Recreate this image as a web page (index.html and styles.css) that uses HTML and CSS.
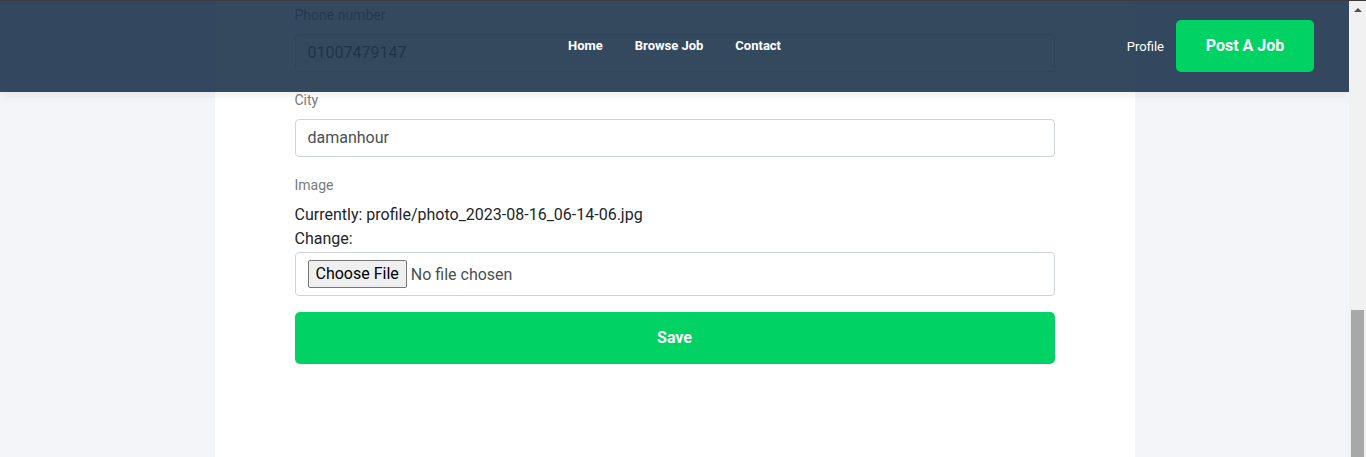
FILE: index.html
```html
<!DOCTYPE html>
<html lang="en">
<head>
<meta charset="utf-8">
<title>Edit Profile</title>
<link rel="stylesheet" href="styles.css">
</head>
<body>
<div class="window">
  <div class="viewport">
    <main class="page">
      <section class="card">
        <form class="profile-form">
          <div class="field">
            <label class="field-label">Phone number</label>
            <div class="input">01007479147</div>
          </div>
          <div class="field">
            <label class="field-label">City</label>
            <div class="input">damanhour</div>
          </div>
          <div class="field image-field">
            <label class="field-label">Image</label>
            <div class="current">Currently: profile/photo_2023-08-16_06-14-06.jpg</div>
            <div class="current">Change:</div>
            <div class="file-input">
              <span class="file-btn">Choose File</span>
              <span class="file-name">No file chosen</span>
            </div>
          </div>
          <button type="button" class="save-btn">Save</button>
        </form>
      </section>
    </main>
    <header class="topbar">
      <div class="topbar-left"></div>
      <nav class="nav">
        <a class="nav-link">Home</a>
        <a class="nav-link">Browse Job</a>
        <a class="nav-link">Contact</a>
      </nav>
      <div class="topbar-right">
        <a class="profile-link">Profile</a>
        <a class="post-btn">Post A Job</a>
      </div>
    </header>
  </div>
  <div class="scrollbar">
    <div class="scroll-arrow"></div>
    <div class="scroll-space"></div>
    <div class="scroll-thumb"></div>
  </div>
  <div class="frame-line"></div>
</div>
</body>
</html>
```

FILE: styles.css
```css
* { box-sizing: border-box; }

html, body {
  margin: 0;
  padding: 0;
  height: 457px;
  overflow: hidden;
  font-family: Roboto, "Liberation Sans", Arial, sans-serif;
}

.window {
  display: flex;
  width: 1366px;
  height: 457px;
  position: relative;
}

.viewport {
  position: relative;
  width: 1349px;
  height: 457px;
  overflow: hidden;
  background: #f4f5f9;
}

.page {
  display: flex;
  justify-content: center;
  height: 100%;
}

.card {
  width: 920px;
  background: #ffffff;
  padding: 5px 80px 0 80px;
}

.field {
  display: flex;
  flex-direction: column;
  margin-bottom: 18px;
}

.field-label {
  font-size: 14px;
  line-height: 20px;
  color: #777b80;
  margin-bottom: 9px;
}

.input {
  height: 38px;
  border: 1px solid #ced4da;
  border-radius: 4px;
  padding: 0 12px;
  font-size: 16px;
  line-height: 36px;
  color: #495057;
}

.image-field .field-label {
  margin-bottom: 8px;
}

.image-field {
  margin-bottom: 16px;
}

.current {
  font-size: 16px;
  line-height: 24px;
  color: #212529;
}

.file-input {
  display: flex;
  align-items: center;
  height: 44px;
  margin-top: 1px;
  border: 1px solid #ced4da;
  border-radius: 4px;
  padding: 0 12px;
  font-size: 16px;
  color: #495057;
}

.file-btn {
  display: inline-flex;
  align-items: center;
  height: 28px;
  padding: 0 7px 1px;
  margin-right: 4px;
  background: #efefef;
  border: 1px solid #767676;
  border-radius: 2px;
  color: #000;
}

.file-name {
  color: #495057;
}

.save-btn {
  display: block;
  width: 100%;
  height: 52px;
  padding: 0 0 2px;
  border: none;
  border-radius: 5px;
  background: #00d363;
  color: #fff;
  font-family: inherit;
  font-size: 16px;
  font-weight: 700;
}

.topbar {
  position: absolute;
  top: 0;
  left: 0;
  right: 0;
  height: 92px;
  display: grid;
  grid-template-columns: 1fr auto 1fr;
  align-items: center;
  padding: 0 35px;
  background: rgba(24, 48, 72, 0.88);
  box-shadow: 0 2px 10px rgba(0, 0, 0, 0.08);
}

.nav {
  display: flex;
  gap: 32px;
  margin-top: -1px;
}

.nav-link {
  color: #fff;
  font-size: 13px;
  font-weight: 700;
}

.topbar-right {
  display: flex;
  justify-content: flex-end;
  align-items: center;
  gap: 12px;
}

.profile-link {
  color: #fff;
  font-size: 13px;
}

.post-btn {
  display: flex;
  align-items: center;
  justify-content: center;
  width: 138px;
  height: 52px;
  padding-bottom: 2px;
  border-radius: 5px;
  background: #00d363;
  color: #fff;
  font-size: 16px;
  font-weight: 700;
}

.scrollbar {
  width: 17px;
  height: 457px;
  background: #f1f1f1;
  display: flex;
  flex-direction: column;
  align-items: center;
}

.scroll-arrow {
  margin-top: 8px;
  width: 0;
  height: 0;
  border-left: 4px solid transparent;
  border-right: 4px solid transparent;
  border-bottom: 4px solid #505050;
}

.scroll-space {
  height: 298px;
}

.scroll-thumb {
  width: 13px;
  flex: 1;
  background: #a8a8a8;
}

.frame-line {
  position: absolute;
  top: 0;
  left: 0;
  right: 0;
  height: 1px;
  background: #3b3b3b;
}
```
